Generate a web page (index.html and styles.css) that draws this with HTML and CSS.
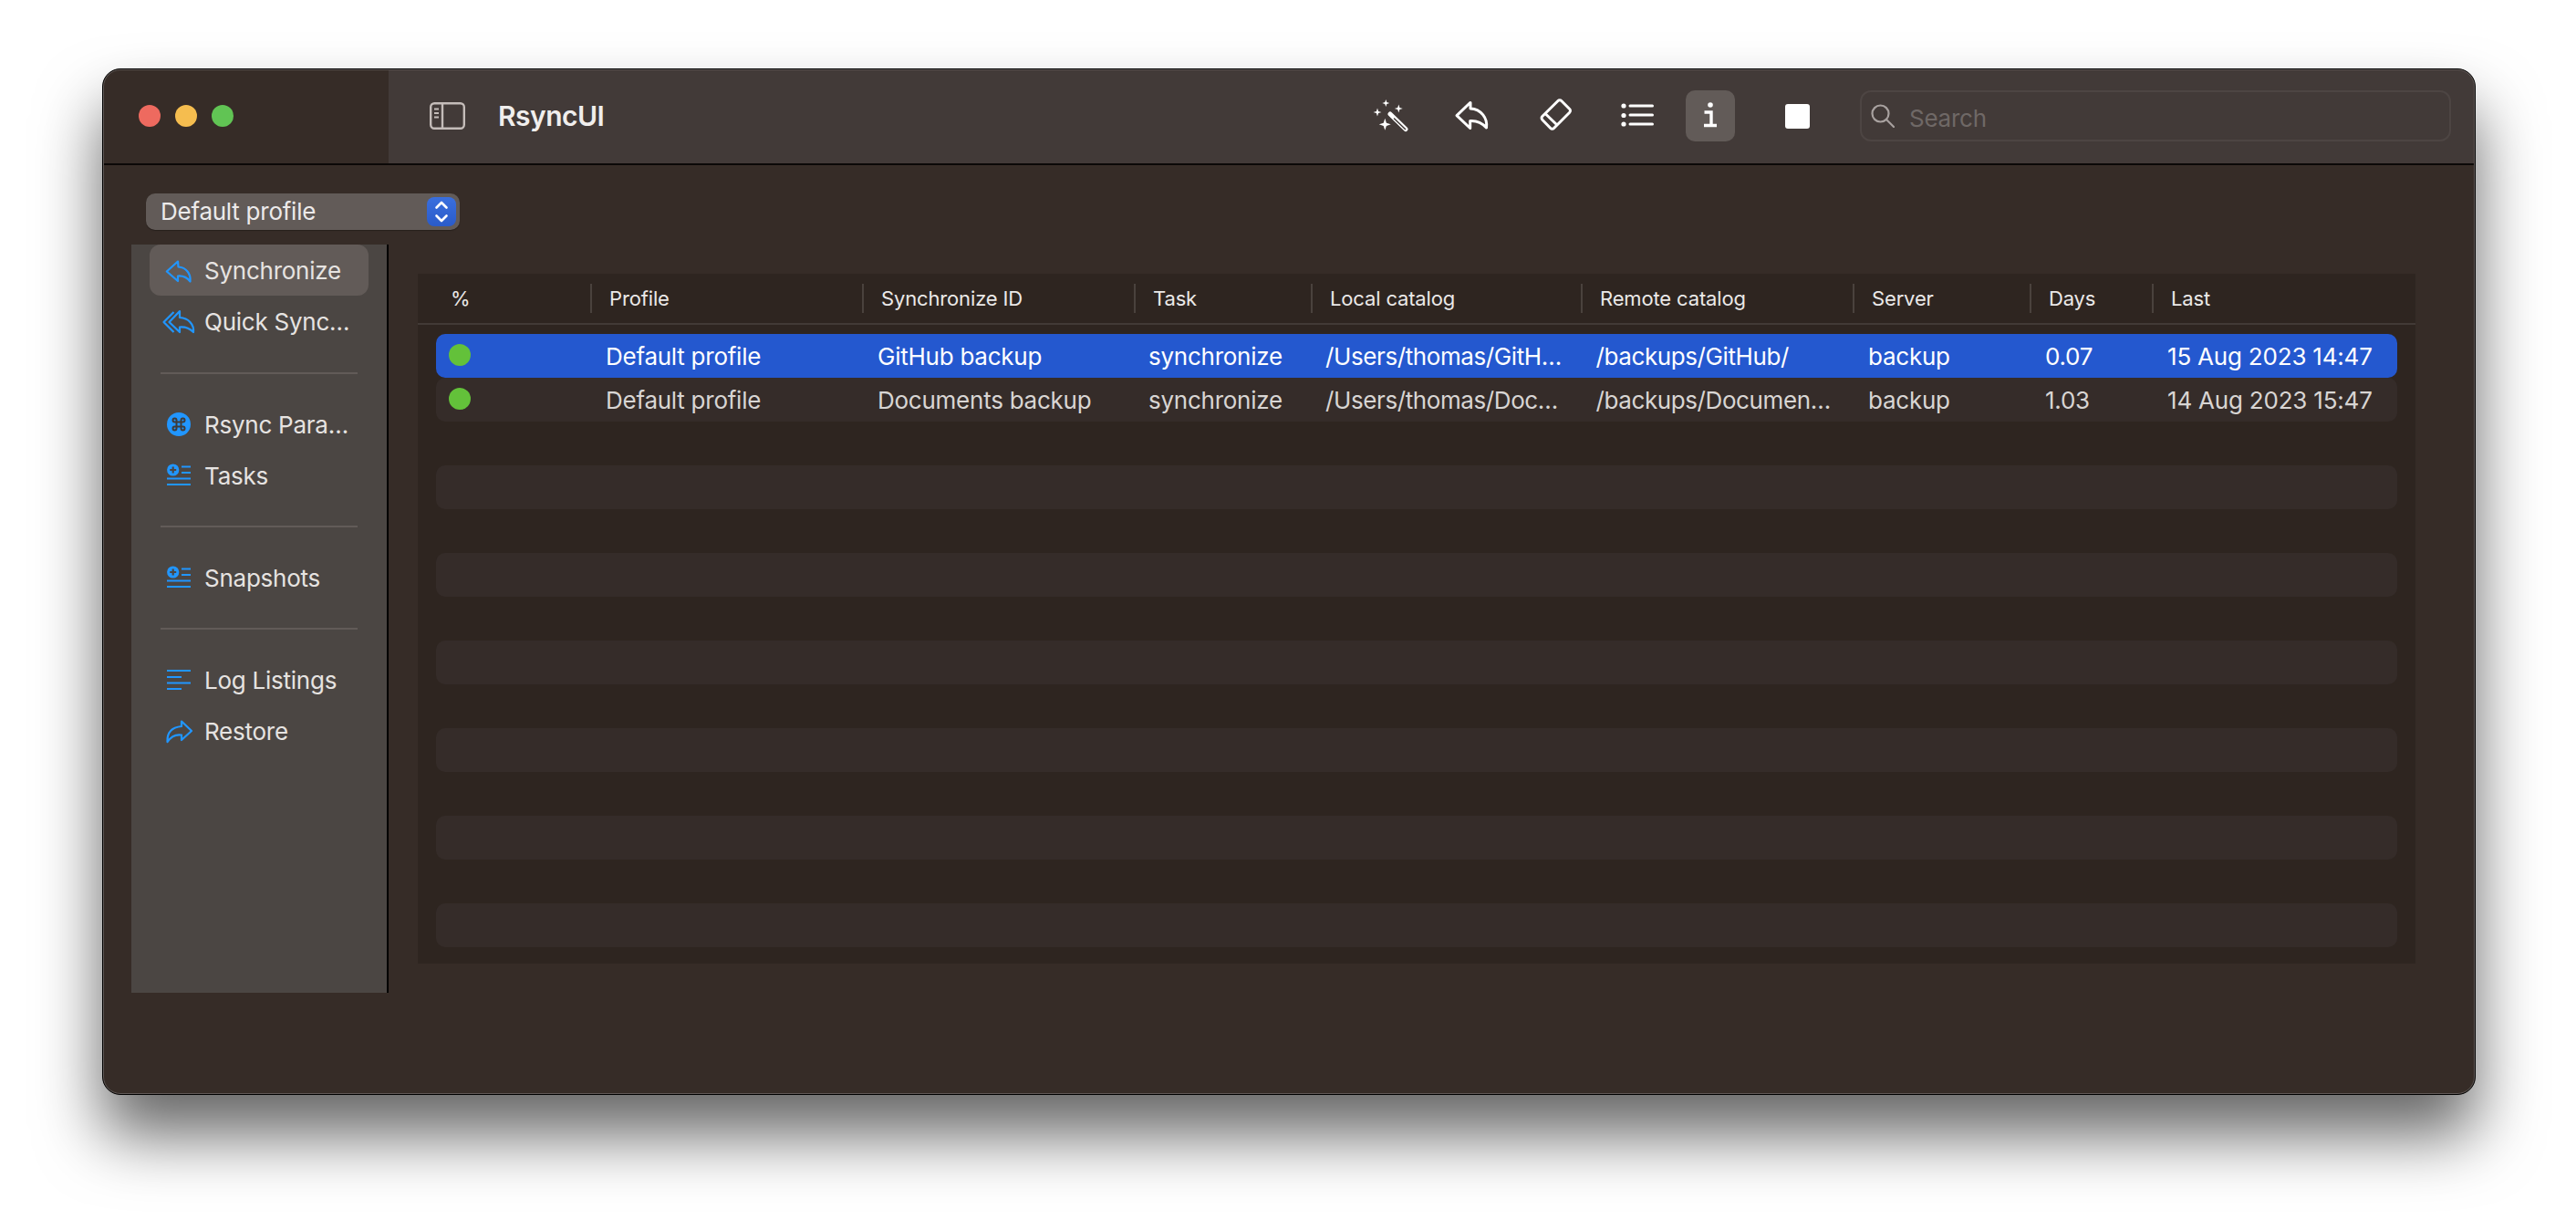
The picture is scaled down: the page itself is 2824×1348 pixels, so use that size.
FILE: index.html
```html
<!DOCTYPE html>
<html lang="en">
<head>
<meta charset="utf-8">
<title>RsyncUI</title>
<link rel="stylesheet" href="styles.css">
</head>
<body>
<div class="window">
  <header class="titlebar">
    <div class="lights">
      <span class="light red"></span><span class="light yellow"></span><span class="light green"></span>
    </div>
    <div class="toolbar">
      <svg class="sidebar-toggle" viewBox="0 0 39 30" fill="none" stroke="#c4bcb9" stroke-width="2.4">
        <rect x="1.2" y="1.2" width="36.6" height="27.6" rx="4"/><path d="M14 1.5v27"/><path d="M5 7.5h5M5 12h5M5 16.500h5" stroke-width="2"/>
      </svg>
      <div class="app-title">RsyncUI</div>
      <div class="tools">
        <button class="tool"><svg viewBox="0 0 54 56" fill="#fff"><path d="M22.300 10l1 3 3 1-3 1-1 3-1-3-3-1 3-1z"/><path d="M36.300 15.500l1.100 3.400 3.400 1.100-3.400 1.100-1.100 3.400-1.100-3.400-3.400-1.100 3.400-1.100z"/><path d="M13 19.500l1.100 3.400 3.400 1.100-3.400 1.100-1.100 3.400-1.100-3.400-3.400-1.100 3.400-1.100z"/><path d="M21.300 30.800l1.600 4.900 4.900 1.600-4.900 1.600-1.600 4.900-1.600-4.900-4.900-1.600 4.900-1.600z"/><path d="M27 26l17 16.500" fill="none" stroke="#fff" stroke-width="5" stroke-linecap="round"/><path d="M31.500 31l12 11.500" fill="none" stroke="#423a38" stroke-width="1.500" stroke-linecap="round"/></svg></button>
        <button class="tool tool-reply"><svg viewBox="0 0 54 56" fill="none" stroke="#fff" stroke-width="3" stroke-linejoin="round"><path d="M25.700 13.500L11 27.700l14.700 13.800v-8c7.300-.5 13.300 2.500 17.800 7.500 1.500-10-5.500-20.500-17.500-21v-6.500z"/></svg></button>
        <button class="tool tool-eraser"><svg viewBox="0 0 54 56" fill="none" stroke="#fff" stroke-width="3" stroke-linejoin="round"><path d="M30 11.500a2.600 2.600 0 0 1 3.700 0l9 9a2.600 2.600 0 0 1 0 3.700L25.500 41.500a2.600 2.600 0 0 1-3.700 0l-9-9.300a2.600 2.600 0 0 1 0-3.700z"/><path d="M16 25.500l13 12.500"/></svg></button>
        <button class="tool"><svg viewBox="0 0 54 56" fill="#fff" stroke="none"><circle cx="12" cy="17" r="2.600"/><circle cx="12" cy="27.500" r="2.600"/><circle cx="12" cy="37" r="2.600"/><path d="M19 17h24.500M19 27h24.500M19 37h24.500" stroke="#fff" stroke-width="3" stroke-linecap="round"/></svg></button>
        <button class="tool tool-active"><svg viewBox="0 0 54 56" fill="none" stroke="#fff" stroke-width="3.400"><circle cx="27" cy="16" r="2.800" fill="#fff" stroke="none"/><path d="M20.500 24h7.500v14.500M20 38.500h14"/></svg></button>
        <button class="tool tool-stop"><span class="stop-square"></span></button>
      </div>
      <div class="search">
        <svg class="search-icon" viewBox="0 0 26 26" fill="none" stroke="#a8a19f" stroke-width="2.200" stroke-linecap="round"><circle cx="10.500" cy="10.500" r="9"/><path d="M17 17l8 8"/></svg>
        <span class="search-text">Search</span>
      </div>
    </div>
  </header>

  <div class="content">
    <div class="picker">
      <span class="picker-label">Default profile</span>
      <span class="stepper"><svg viewBox="0 0 32 32" fill="none" stroke="#fff" stroke-width="2.600" stroke-linecap="round" stroke-linejoin="round"><path d="M10.500 11.500L16 6l5.500 5.500M10.500 20.500L16 26l5.500-5.500"/></svg></span>
    </div>

    <div class="panes">
      <nav class="sidebar">
        <a class="item selected">
          <svg class="nav-icon" viewBox="0 0 32 32"><path d="M15 6.500L2.800 17.500 15 28v-5.500c6-.5 10 1.500 13.500 6 1-8.500-4.500-15.500-13-16z"/></svg>
          <span>Synchronize</span>
        </a>
        <a class="item">
          <svg class="nav-icon" viewBox="0 0 32 32"><path d="M17 5L5.500 17 17 28v-5.500c6-.5 11 1.500 15 5.500 1-8-5-15.500-15-16z"/><path d="M10.500 6L-.5 17l11 11"/></svg>
          <span>Quick Sync…</span>
        </a>
        <hr class="rule">
        <a class="item">
          <svg class="nav-icon" viewBox="0 0 32 32"><circle cx="16" cy="16" r="13" fill="#2196ff" stroke="none"/><path stroke="#3f3b39" stroke-width="2" d="M13.500 13.500h5v5h-5zM13.500 13.500v-2a2 2 0 1 0-2 2h2M18.500 13.500v-2a2 2 0 1 1 2 2h-2M13.500 18.500v2a2 2 0 1 1-2-2h2M18.500 18.500v2a2 2 0 1 0 2-2h-2"/></svg>
          <span>Rsync Para…</span>
        </a>
        <a class="item">
          <svg class="nav-icon" viewBox="0 0 32 32"><circle cx="9.700" cy="10" r="6.600" fill="#2196ff" stroke="none"/><path stroke="#4b4643" d="M9.700 6.500v7M6.200 10h7"/><path d="M19 6.500h10M19 13h10M3 19.500h26M3 26h26"/></svg>
          <span>Tasks</span>
        </a>
        <hr class="rule">
        <a class="item">
          <svg class="nav-icon" viewBox="0 0 32 32"><circle cx="9.700" cy="10" r="6.600" fill="#2196ff" stroke="none"/><path stroke="#4b4643" d="M9.700 6.500v7M6.200 10h7"/><path d="M19 6.500h10M19 13h10M3 19.500h26M3 26h26"/></svg>
          <span>Snapshots</span>
        </a>
        <hr class="rule">
        <a class="item">
          <svg class="nav-icon" viewBox="0 0 32 32"><path d="M3 6h26M3 13h16M3 19.500h26M3 26h16"/></svg>
          <span>Log Listings</span>
        </a>
        <a class="item">
          <svg class="nav-icon" viewBox="0 0 32 32"><path d="M19 5.500L30 16 19 26v-5.500c-6-1-11 1-15.500 7.500-.5-10 5-16 15.500-17z"/></svg>
          <span>Restore</span>
        </a>
      </nav>

      <main class="table">
        <div class="thead">
          <div class="th">%</div><div class="th">Profile</div><div class="th">Synchronize ID</div><div class="th">Task</div><div class="th">Local catalog</div><div class="th">Remote catalog</div><div class="th">Server</div><div class="th">Days</div><div class="th">Last</div>
        </div>
        <div class="tbody">
          <div class="row active"><div class="cell"><span class="dot"></span></div><div class="cell">Default profile</div><div class="cell">GitHub backup</div><div class="cell">synchronize</div><div class="cell path">/Users/thomas/GitH…</div><div class="cell path">/backups/GitHub/</div><div class="cell">backup</div><div class="cell">0.07</div><div class="cell date">15 Aug 2023 14:47</div></div>
          <div class="row stripe"><div class="cell"><span class="dot"></span></div><div class="cell">Default profile</div><div class="cell">Documents backup</div><div class="cell">synchronize</div><div class="cell path">/Users/thomas/Doc…</div><div class="cell path">/backups/Documen…</div><div class="cell">backup</div><div class="cell">1.03</div><div class="cell date">14 Aug 2023 15:47</div></div>
          <div class="row"></div><div class="row stripe"></div>
          <div class="row"></div><div class="row stripe"></div>
          <div class="row"></div><div class="row stripe"></div>
          <div class="row"></div><div class="row stripe"></div>
          <div class="row"></div><div class="row stripe"></div>
          <div class="row"></div><div class="row stripe"></div>
        </div>
      </main>
    </div>
  </div>
</div>
</body>
</html>
```
FILE: styles.css
```css
* { box-sizing: border-box; }
html, body { margin: 0; height: 100%; }
body {
  background: #fff;
  padding: 75px 0 0 112px;
  overflow: hidden;
  font-family: Inter, "Liberation Sans", sans-serif;
  color: #e6e3e1;
}
.window {
  width: 2602px;
  height: 1125px;
  background: #362c27;
  border: 1px solid #000;
  border-radius: 20px;
  box-shadow: 0 44px 70px rgba(0,0,0,.6);
  position: relative;
  overflow: hidden;
}
.window::after {
  content: "";
  position: absolute;
  inset: 0;
  border: 1px solid #5f5856;
  border-radius: 19px;
  pointer-events: none;
}
.titlebar {
  display: flex;
  height: 105px;
  border-bottom: 2px solid #0b0807;
}
.lights {
  width: 313px;
  padding-left: 39px;
  display: flex;
  align-items: center;
  gap: 16px;
  padding-bottom: 1px;
}
.light { width: 24px; height: 24px; border-radius: 50%; }
.red { background: #ee6a5f; }
.yellow { background: #f5bd4f; }
.green { background: #61c454; }
.toolbar {
  flex: 1;
  background: #423a38;
  display: flex;
  align-items: center;
  padding: 0 26px 1px 45px;
}
.sidebar-toggle { width: 39px; height: 30px; flex: none; }
.app-title {
  flex: 1;
  margin-left: 36px;
  font-size: 30px;
  font-weight: 600;
  letter-spacing: -.5px;
  color: #f0eeed;
}
.tools { display: flex; gap: 36px; align-items: center; }
.tool {
  width: 54px;
  height: 56px;
  padding: 0;
  border: 0;
  border-radius: 10px;
  background: none;
  display: flex;
  align-items: center;
  justify-content: center;
}
.tool svg { width: 54px; height: 56px; display: block; }
.tool-reply { margin-left: -1px; }
.tool-eraser { margin-left: 2px; }
.tool-active { background: #625b58; margin-left: -10px; }
.tool-stop { margin-left: 5px; }
.stop-square { width: 27px; height: 27px; border-radius: 3px; background: #fff; }
.search {
  width: 648px;
  height: 56px;
  margin-left: 42px;
  border: 2px solid #4d4543;
  border-radius: 12px;
  padding-left: 10px;
  display: flex;
  align-items: center;
  gap: 16px;
}
.search-icon { width: 26px; height: 26px; }
.search-text { font-size: 26px; color: #6f6866; padding-top: 5px; letter-spacing: -.25px; }

.content { padding-top: 31px; }
.picker {
  width: 344px;
  height: 40px;
  margin-left: 47px;
  padding: 0 4px 0 16px;
  background: #625b58;
  border-radius: 10px;
  display: flex;
  align-items: center;
  justify-content: space-between;
  box-shadow: 0 1px 1px rgba(0,0,0,.3);
}
.picker-label { font-size: 26px; letter-spacing: -.25px; color: #eceaea; padding-bottom: 2px; }
.stepper { width: 32px; height: 32px; border-radius: 8px; background: linear-gradient(#3a6fde, #2a5bc9); }
.stepper svg { width: 32px; height: 32px; display: block; }

.panes { display: flex; margin: 16px 0 0 31px; align-items: flex-start; }
.sidebar {
  width: 282px;
  height: 820px;
  flex: none;
  background: #4b4643;
  border-right: 2px solid #000;
  padding: 0 20px;
}
.item {
  height: 56px;
  padding-left: 16px;
  display: flex;
  align-items: center;
  gap: 12px;
  border-radius: 12px;
  font-size: 26px;
  letter-spacing: -.25px;
}
.item.selected { background: #625b58; }
.nav-icon {
  width: 32px;
  height: 32px;
  flex: none;
  overflow: visible;
  fill: none;
  stroke: #2196ff;
  stroke-width: 2.200;
  stroke-linejoin: round;
}
.rule {
  width: 216px;
  height: 2px;
  margin: 27px 0 27px 12px;
  border: 0;
  background: #625b58;
}
.rule:first-of-type { margin-top: 28px; }

.table {
  width: 2190px;
  height: 756px;
  margin: 32px 0 0 32px;
  background: #2e2520;
}
.thead {
  height: 56px;
  display: grid;
  grid-template-columns: 189px 298px 298px 194px 296px 298px 194px 134px 1fr;
  align-items: center;
  border-bottom: 2px solid #423a36;
}
.th {
  height: 32px;
  border-left: 2px solid #4a423d;
  padding-left: 19px;
  display: flex;
  align-items: center;
  font-size: 22px;
  letter-spacing: -.15px;
  color: #ebe9e8;
}
.th:first-child { border-left: 0; padding-left: 36px; }
.tbody { padding: 10px 20px 0; }
.row {
  height: 48px;
  display: grid;
  grid-template-columns: 186px 298px 297px 194px 296.500px 298.500px 194px 134px 1fr;
  align-items: center;
  border-radius: 10px;
  font-size: 26px;
  letter-spacing: -.25px;
  color: #d8d5d3;
}
.stripe { background: #352c29; }
.active { background: #2458cf; color: #fff; }
.cell { white-space: nowrap; }
.path { letter-spacing: -.4px; }
.date { letter-spacing: -.2px; }
.dot {
  display: block;
  width: 24px;
  height: 24px;
  margin: -2px 0 0 14px;
  border-radius: 50%;
  background: #63c13a;
}
```
